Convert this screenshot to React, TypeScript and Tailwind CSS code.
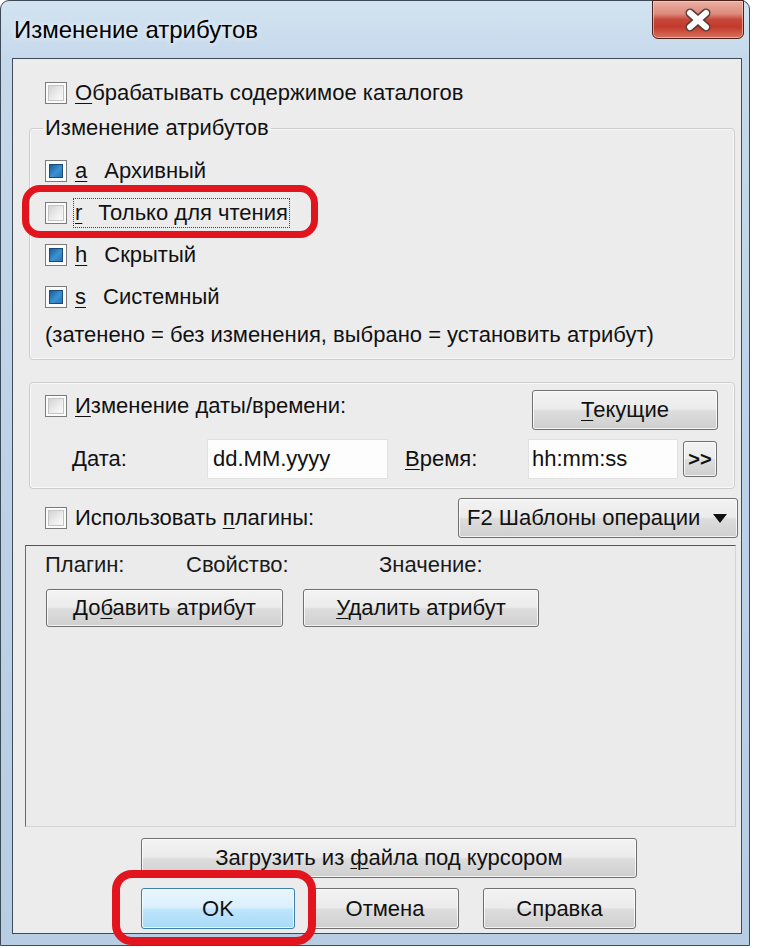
import { ReactNode } from "react";

function Check({ on = false }: { on?: boolean }) {
  return (
    <div className="flex h-[22px] w-[22px] shrink-0 items-center justify-center border border-[#7b7b7b] bg-[#fbfbfb]">
      {on ? (
        <div className="h-[14px] w-[14px] border border-[#1b4a78] bg-[linear-gradient(135deg,#1c5d98_0%,#3b92d2_55%,#2a74b4_100%)]" />
      ) : (
        <div className="h-[16px] w-[16px] border border-[#c4c4c4] bg-[linear-gradient(135deg,#d3d3d3_0%,#eeeeee_60%,#fafafa_100%)]" />
      )}
    </div>
  );
}

function Btn({
  children,
  className = "",
  primary = false,
}: {
  children: ReactNode;
  className?: string;
  primary?: boolean;
}) {
  return (
    <div
      className={`flex shrink-0 items-center justify-center rounded-[3px] border shadow-[inset_0_0_0_1px_rgba(255,255,255,0.75)] ${
        primary
          ? "border-[#3c7fb1] bg-[linear-gradient(#eaf6fd_0%,#d9f0fc_48%,#bee6fd_52%,#a7d9f5_100%)]"
          : "border-[#707070] bg-[linear-gradient(#f3f3f3_0%,#ebebeb_48%,#dddddd_52%,#cfcfcf_100%)]"
      } ${className}`}
    >
      {children}
    </div>
  );
}

function U({ children }: { children: ReactNode }) {
  return <u className="underline decoration-1 underline-offset-[3px]">{children}</u>;
}

function AttrRow({
  k,
  label,
  on = false,
  focus = false,
}: {
  k: string;
  label: string;
  on?: boolean;
  focus?: boolean;
}) {
  return (
    <div className="relative flex h-[22px] items-center">
      <Check on={on} />
      {focus ? (
        <span className="ml-[6px] border border-dotted border-[#444] px-px py-[2px]">
          <U>{k}</U>
          <span className="ml-[16px]">{label}</span>
        </span>
      ) : (
        <span className="ml-[8px]">
          <U>{k}</U>
          <span className="ml-[17px]">{label}</span>
        </span>
      )}
      {focus && (
        <div className="pointer-events-none absolute left-[-23px] top-[-17px] h-[53px] w-[296px] rounded-[18px] border-[7px] border-[#e2141d]" />
      )}
    </div>
  );
}

export default function App() {
  return (
    <div className="min-h-screen bg-white font-['Liberation_Sans',Arial,sans-serif] text-[22px] leading-[24px] text-[#111]">
      <div className="flex h-[946px] w-[750px] flex-col rounded-t-[9px] border border-[#3d4a58] bg-[linear-gradient(180deg,#d3e3f1_0%,#c6d9eb_6%,#bdd2e7_50%,#b7cde3_100%)]">
        {/* title bar */}
        <div className="flex h-[57px] shrink-0 items-start">
          <div className="ml-[13px] self-center text-[24px] text-black [text-shadow:0_0_6px_rgba(255,255,255,0.95)]">
            Изменение атрибутов
          </div>
          <div className="ml-auto mr-[5px] -mt-px flex h-[39px] w-[92px] items-center justify-center rounded-b-[6px] border border-[#4b2019] bg-[linear-gradient(180deg,#eab0a5_0%,#dc8a7b_35%,#c8473a_50%,#c13a2b_70%,#d8715e_100%)] shadow-[inset_0_0_0_1px_rgba(255,210,200,0.6)]">
            <svg width="30" height="24" viewBox="0 0 30 24">
              <path d="M7 5 L23 19 M23 5 L7 19" stroke="#5a3a34" strokeWidth="9" strokeLinecap="round" />
              <path d="M7 5 L23 19 M23 5 L7 19" stroke="#ffffff" strokeWidth="6" strokeLinecap="round" />
            </svg>
          </div>
        </div>

        {/* client area */}
        <div className="ml-[11px] mr-[7px] flex h-[876px] flex-col border border-[#3f4b57] bg-[#ececec]">
          <div className="mt-[23px] flex h-[22px] items-center pl-[32px]">
            <Check />
            <span className="ml-[8px]">
              <U>О</U>брабатывать содержимое каталогов
            </span>
          </div>

          <fieldset className="ml-[16px] mr-[6px] mt-[12px] rounded-[4px] border border-[#cdcdcd] p-0 shadow-[inset_0_0_0_1px_#f8f8f8]">
            <legend className="ml-[13px] px-[2px] leading-[24px]">Изменение атрибутов</legend>
            <div className="flex flex-col gap-[20px] pl-[15px] pt-[20px]">
              <AttrRow k="a" label="Архивный" on />
              <AttrRow k="r" label="Только для чтения" focus />
              <AttrRow k="h" label="Скрытый" on />
              <AttrRow k="s" label="Системный" on />
            </div>
            <div className="mt-[15px] pb-[12px] pl-[15px]">
              (затенено = без изменения, выбрано = установить атрибут)
            </div>
          </fieldset>

          <div className="ml-[16px] mr-[6px] mt-[22px] flex h-[107px] flex-col rounded-[4px] border border-[#cdcdcd] pt-[7px] shadow-[inset_0_0_0_1px_#f8f8f8]">
            <div className="flex items-start">
              <div className="ml-[15px] mt-[5px] flex h-[22px] items-center">
                <Check />
                <span className="ml-[8px]">
                  <U>И</U>зменение даты/времени:
                </span>
              </div>
              <Btn className="ml-auto mr-[16px] h-[40px] w-[186px]">
                <span>
                  <U>Т</U>екущие
                </span>
              </Btn>
            </div>
            <div className="mt-[9px] flex h-[40px] items-center">
              <span className="ml-[42px] w-[135px]">
                <U>Д</U>ата:
              </span>
              <div className="flex h-[40px] w-[181px] items-center border border-[#e1e1e1] bg-[#fdfdfd] pl-[5px]">
                dd.MM.yyyy
              </div>
              <span className="ml-[17px] w-[123px]">
                <U>В</U>ремя:
              </span>
              <div className="flex h-[40px] w-[150px] items-center border border-[#e1e1e1] bg-[#fdfdfd] pl-[3px]">
                hh:mm:ss
              </div>
              <Btn className="ml-[5px] h-[36px] w-[34px] text-[20px] font-bold">&gt;&gt;</Btn>
            </div>
          </div>

          <div className="mt-[9px] flex h-[40px] items-center pl-[32px]">
            <Check />
            <span className="ml-[8px]">
              Использовать <U>п</U>лагины:
            </span>
            <Btn className="ml-auto mr-[3px] h-[40px] w-[280px] !justify-between pl-[8px] pr-[10px]">
              <span>F2 Шаблоны операции</span>
              <svg width="14" height="9" viewBox="0 0 14 9">
                <path d="M0 0 H14 L7 9 Z" fill="#111" />
              </svg>
            </Btn>
          </div>

          <div className="ml-[12px] mr-[5px] mt-[7px] flex h-[282px] flex-col border-b border-l border-r border-t border-b-[#d4d4d4] border-l-[#6a6a6a] border-r-[#d4d4d4] border-t-[#555] bg-[#ebebeb]">
            <div className="mt-[7px] flex text-[#1a1a1a]">
              <span className="ml-[19px] w-[141px]">Плагин:</span>
              <span className="w-[193px]">Свойство:</span>
              <span>Значение:</span>
            </div>
            <div className="mt-[12px] flex">
              <Btn className="ml-[20px] h-[38px] w-[237px]">
                <span>
                  До<U>б</U>авить атрибут
                </span>
              </Btn>
              <Btn className="ml-[20px] h-[38px] w-[236px]">
                <span>
                  <U>У</U>далить атрибут
                </span>
              </Btn>
            </div>
          </div>

          <Btn className="ml-[128px] mt-[11px] h-[40px] w-[496px]">
            <span>
              Загрузить из <U>ф</U>айла под курсором
            </span>
          </Btn>
          <div className="mt-[10px] flex">
            <div className="relative ml-[128px]">
              <Btn primary className="h-[41px] w-[154px]">
                OK
              </Btn>
              <div className="pointer-events-none absolute left-[-29px] top-[-18px] h-[75px] w-[204px] rounded-[20px] border-[8px] border-[#e2141d]" />
            </div>
            <Btn className="ml-[16px] h-[41px] w-[148px]">Отмена</Btn>
            <Btn className="ml-[24px] h-[41px] w-[153px]">Справка</Btn>
          </div>
        </div>
      </div>
    </div>
  );
}
